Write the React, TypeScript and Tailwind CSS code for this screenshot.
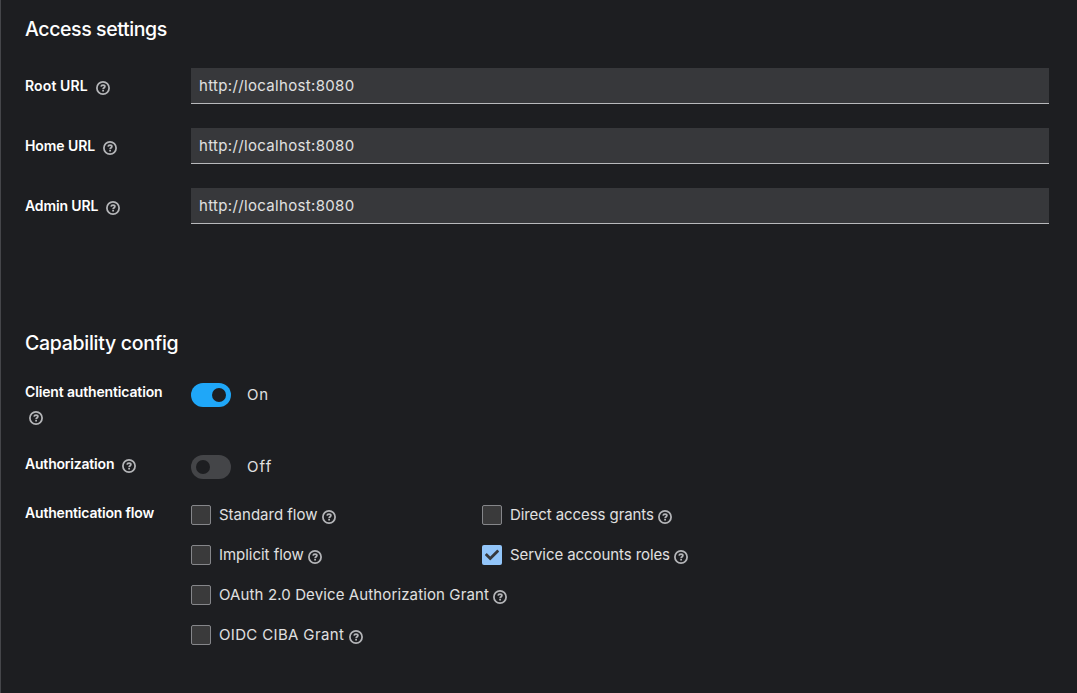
function HelpIcon() {
  return (
    <svg viewBox="0 0 14 14" className="size-3.5 shrink-0" fill="none" stroke="#b4b5b8">
      <circle cx="7" cy="7" r="6.1" strokeWidth="1.75" />
      <path d="M5.1 5.7C5.2 4.700 5.900 4.200 7 4.200c1.100 0 1.900.5 1.900 1.400C8.900 6.700 7.100 6.700 7.100 8.200" strokeWidth="1.750" />
      <path d="M7.100 8.900v1.700" strokeWidth="1.800" />
    </svg>
  );
}

function Field({ label, spacing }: { label: string; spacing: string }) {
  return (
    <div className="flex h-9">
      <div className="flex w-[166px] pt-[7px]">
        <span className={`mr-2 text-sm leading-[21px] font-semibold text-white ${spacing}`}>{label}</span>
        <span className="pt-1.5"><HelpIcon /></span>
      </div>
      <input
        className="h-9 w-[858px] border-b border-[#b8b9bc] bg-[#37383b] px-2 pb-px text-[15px] tracking-[0.33px] text-[#e0e0e0] outline-none"
        defaultValue="http://localhost:8080"
      />
    </div>
  );
}

function Toggle({ on }: { on: boolean }) {
  return (
    <div className={`flex h-6 w-10 items-center rounded-full px-[5px] ${on ? "justify-end bg-[#1fa7f8]" : "justify-start bg-[#444548]"}`}>
      <div className="size-3.5 rounded-full bg-[#1d1e21]" />
    </div>
  );
}

function Flow({ label, width, spacing, checked = false }: { label: string; width: string; spacing: string; checked?: boolean }) {
  return (
    <div className="flex h-6 items-center">
      <div className={`mr-2 flex size-5 items-center justify-center rounded-[2px] ${checked ? "bg-[#92c5f9]" : "border border-[#85868a] bg-[#3a3a3b]"}`}>
        {checked && (
          <svg viewBox="0 0 512 512" className="size-3.5" fill="#36383c">
            <path d="M173.900 439.400l-166.400-166.400c-10-10-10-26.200 0-36.200l36.200-36.200c10-10 26.200-10 36.200 0L192 312.700 432.100 72.600c10-10 26.200-10 36.200 0l36.200 36.200c10 10 10 26.200 0 36.200l-294.400 294.400c-10 10-26.200 10-36.200 0z" />
          </svg>
        )}
      </div>
      <span className={`text-[15px] leading-6 whitespace-nowrap text-[#e0e0e0] ${width} ${spacing}`}>{label}</span>
      <span className="pt-1"><HelpIcon /></span>
    </div>
  );
}

export default function App() {
  return (
    <main className="h-[693px] w-[1077px] overflow-hidden border-l border-[#45464a] bg-[#1d1e21] pt-4 pl-6 font-['Inter',sans-serif]">
      <h2 className="h-[26px] text-[19.5px] leading-[26px] font-medium tracking-[-0.4px] text-white">Access settings</h2>
      <div className="mt-[26px] flex flex-col gap-6">
        <Field label="Root URL" spacing="tracking-[0.13px]" />
        <Field label="Home URL" spacing="tracking-[-0.08px]" />
        <Field label="Admin URL" spacing="tracking-[-0.14px]" />
      </div>
      <h2 className="mt-[106px] h-[26px] text-[19.5px] leading-[26px] font-medium tracking-[-0.28px] text-white">Capability config</h2>
      <div className="mt-[25px] flex h-[72px]">
        <div className="w-[166px]">
          <div className="h-[21px] text-sm leading-[21px] font-semibold tracking-[-0.15px] text-white">Client authentication</div>
          <div className="pt-[9px] pl-1"><HelpIcon /></div>
        </div>
        <div className="flex gap-4 pt-0.5">
          <Toggle on />
          <span className="text-[15px] leading-6 tracking-[0.9px] text-[#e0e0e0]">On</span>
        </div>
      </div>
      <div className="flex h-[49px]">
        <div className="flex w-[166px]">
          <span className="mr-[7.5px] text-sm leading-[21px] font-semibold tracking-[-0.2px] text-white">Authorization</span>
          <span className="pt-[5.5px]"><HelpIcon /></span>
        </div>
        <div className="flex gap-4 pt-0.5">
          <Toggle on={false} />
          <span className="text-[15px] leading-6 tracking-[1.1px] text-[#e0e0e0]">Off</span>
        </div>
      </div>
      <div className="flex">
        <div className="w-[166px] text-sm leading-[21px] font-semibold tracking-[-0.18px] text-white">Authentication flow</div>
        <div className="grid grid-cols-[291px_300px] gap-y-4 pt-px">
          <Flow label="Standard flow" width="w-[103px]" spacing="tracking-normal" />
          <Flow label="Direct access grants" width="w-[148px]" spacing="tracking-[-0.08px]" />
          <Flow label="Implicit flow" width="w-[89px]" spacing="tracking-[-0.03px]" />
          <Flow label="Service accounts roles" width="w-[164px]" spacing="tracking-[-0.08px]" checked />
          <div className="col-span-2"><Flow label="OAuth 2.0 Device Authorization Grant" width="w-[274px]" spacing="tracking-[0.12px]" /></div>
          <div className="col-span-2"><Flow label="OIDC CIBA Grant" width="w-[130px]" spacing="tracking-[0.35px]" /></div>
        </div>
      </div>
    </main>
  );
}
